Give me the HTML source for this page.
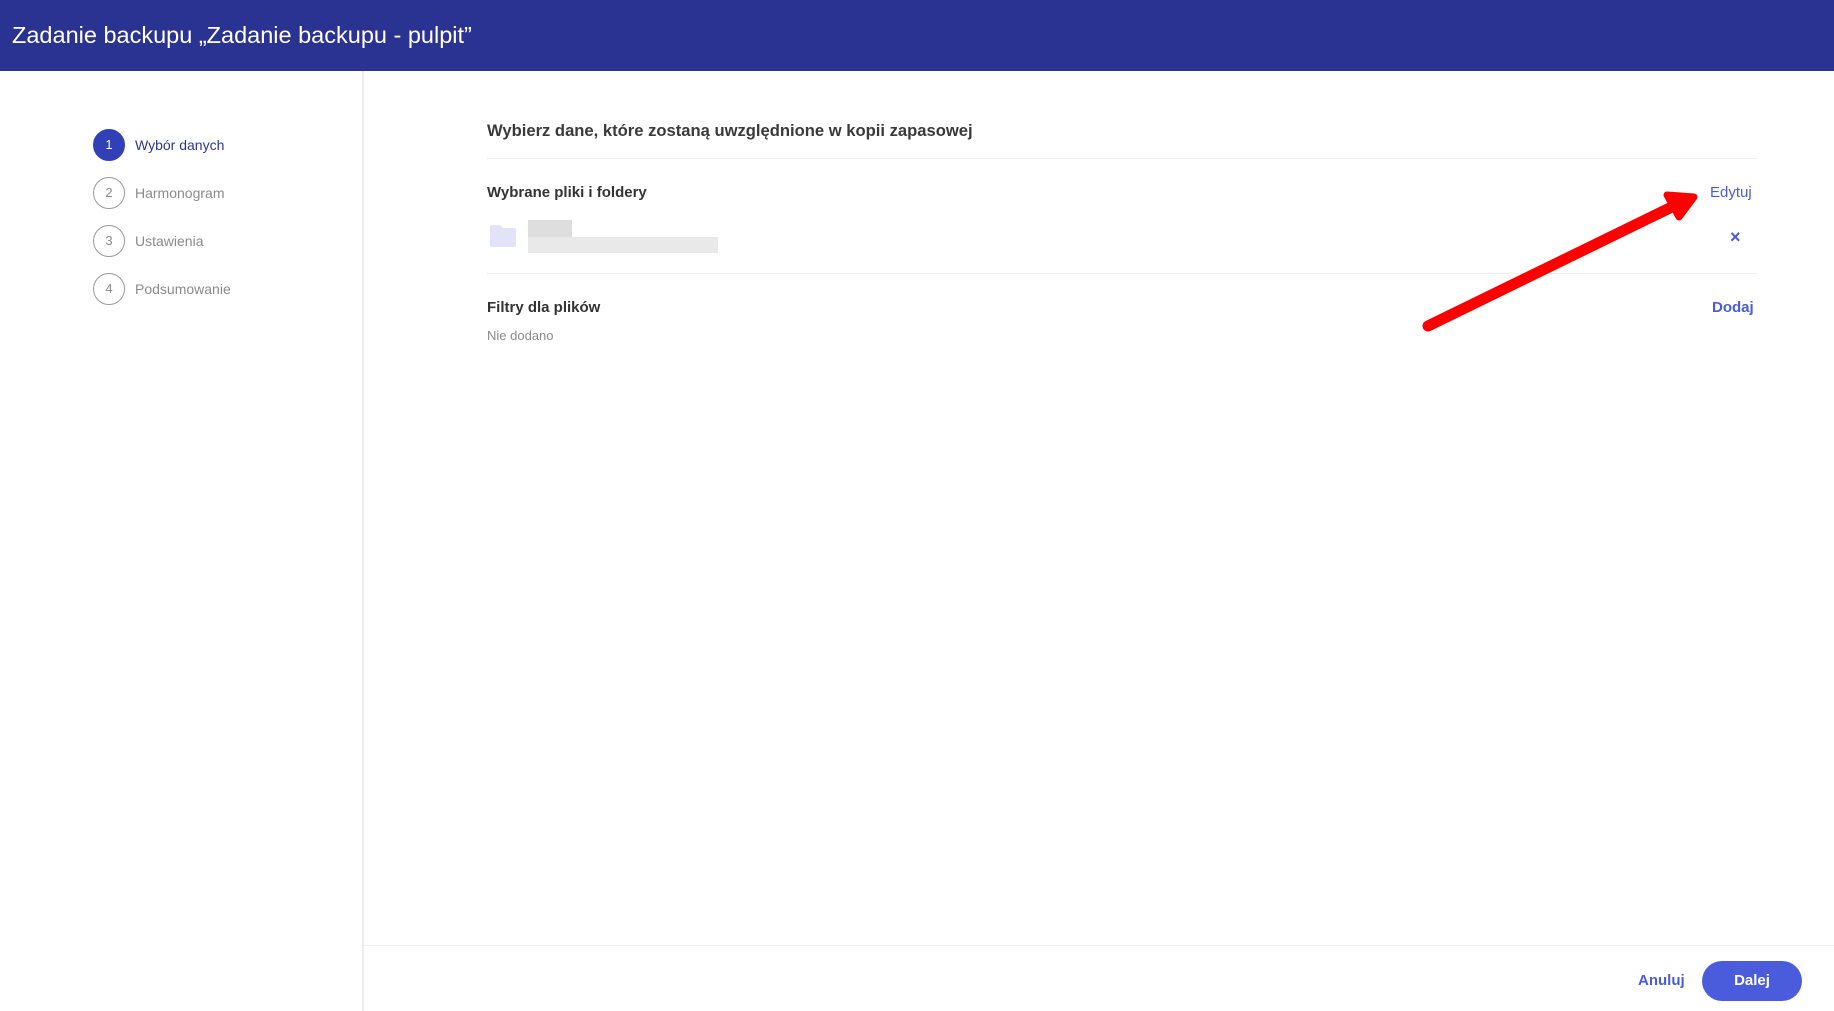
<!DOCTYPE html>
<html><head><meta charset="utf-8"><style>
*{margin:0;padding:0;box-sizing:border-box}
body{width:1834px;height:1011px;position:relative;background:#fff;font-family:"Liberation Sans",sans-serif;overflow:hidden}
.hdr{position:absolute;left:0;top:0;width:1834px;height:71px;background:#2a3391}
.hdr span{position:absolute;left:12px;top:22px;color:#fff;font-size:23.5px;white-space:nowrap}
.side{position:absolute;left:362px;top:71px;width:2px;height:940px;background:#ececec}
.step{position:absolute;left:93px;width:32px;height:32px;border-radius:50%;border:1px solid #999;color:#888;font-size:13px;text-align:center;line-height:30px}
.step.a{background:#3240b8;border-color:#3240b8;color:#fff}
.lab{position:absolute;left:135px;font-size:14px;color:#8a8a8a}
.t{position:absolute;white-space:nowrap}
.line{position:absolute;height:1px;background:#eeeeee}
.blue{color:#4a5bdc}
</style></head><body>
<div class="hdr"><span>Zadanie backupu „Zadanie backupu - pulpit”</span></div>
<div class="side"></div>
<div class="step a" style="top:129px">1</div><div class="lab" style="top:137px;color:#2d3594">Wybór danych</div>
<div class="step" style="top:177px">2</div><div class="lab" style="top:185px">Harmonogram</div>
<div class="step" style="top:225px">3</div><div class="lab" style="top:233px">Ustawienia</div>
<div class="step" style="top:273px">4</div><div class="lab" style="top:281px">Podsumowanie</div>

<div class="t" style="left:487px;top:121px;font-size:16.6px;font-weight:bold;color:#3a3a3a">Wybierz dane, które zostaną uwzględnione w kopii zapasowej</div>
<div class="line" style="left:487px;top:158px;width:1270px"></div>
<div class="t" style="left:487px;top:184px;font-size:15px;color:#333;font-weight:bold;">Wybrane pliki i foldery</div>
<div class="t blue" style="left:1710px;top:184px;font-size:15px">Edytuj</div>
<svg style="position:absolute;left:490px;top:225px" width="26" height="22"><path d="M2 0h8l3 3h11a2 2 0 0 1 2 2v15a2 2 0 0 1-2 2H2a2 2 0 0 1-2-2V2a2 2 0 0 1 2-2z" fill="#e2e2f8"/></svg>
<div style="position:absolute;left:528px;top:220px;width:44px;height:17px;background:#dedede"></div>
<div style="position:absolute;left:528px;top:237px;width:190px;height:16px;background:#e9e9ea"></div>
<div class="t blue" style="left:1730px;top:227px;font-size:18px;font-weight:bold">×</div>
<div class="line" style="left:487px;top:273px;width:1270px"></div>
<div class="t" style="left:487px;top:299px;font-size:15px;color:#333;font-weight:bold;">Filtry dla plików</div>
<div class="t" style="left:487px;top:328px;font-size:13px;color:#8a8a8a">Nie dodano</div>
<div class="t blue" style="left:1712px;top:299px;font-size:15px;font-weight:bold">Dodaj</div>

<svg style="position:absolute;left:0;top:0" width="1834" height="1011">
<line x1="1428" y1="326" x2="1680" y2="203" stroke="#f00" stroke-width="11" stroke-linecap="round"/>
<polygon points="1667,195 1694,197 1679,217" fill="#f00" stroke="#f00" stroke-width="7" stroke-linejoin="round"/>
</svg>

<div class="line" style="left:364px;top:945px;width:1470px"></div>
<div class="t blue" style="left:1638px;top:972px;font-size:15px;font-weight:bold">Anuluj</div>
<div style="position:absolute;left:1702px;top:961px;width:100px;height:40px;border-radius:20px;background:#4a5bdc;color:#fff;font-size:15px;font-weight:bold;text-align:center;line-height:40px">Dalej</div>
</body></html>
